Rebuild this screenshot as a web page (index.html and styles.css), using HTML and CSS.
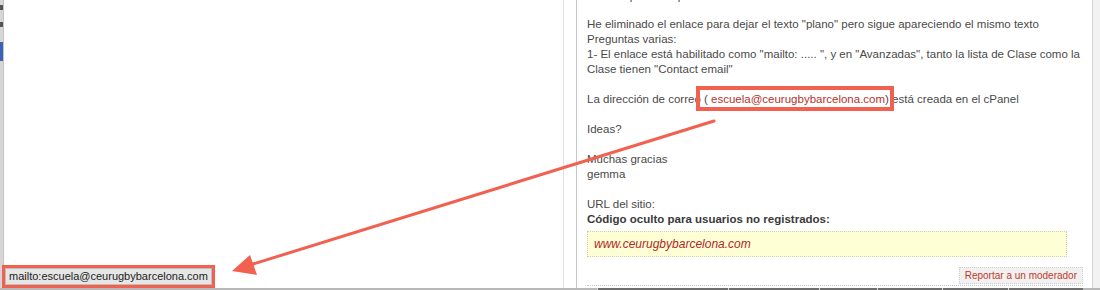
FILE: index.html
```html
<!DOCTYPE html>
<html lang="es">
<head>
  <meta charset="UTF-8">
  <title>Foro - mailto</title>
  <link rel="stylesheet" href="styles.css">
</head>
<body>
  <!-- cut-off sidebar at the very left -->
  <div class="side-edge">
    <span class="side-mark mark-a"></span>
    <span class="side-mark mark-b"></span>
    <span class="side-tab"></span>
  </div>

  <!-- empty left pane -->
  <div class="left-pane"></div>

  <div class="gutter"></div>

  <!-- forum post -->
  <div class="post">
    <div class="cut-line">Gracias por la respuesta.</div>
    <div class="post-body">
      He eliminado el enlace para dejar el texto "plano" pero sigue apareciendo el mismo texto<br>
      Preguntas varias:<br>
      1- El enlace está habilitado como "mailto: ..... ", y en "Avanzadas", tanto la lista de Clase como la<br>
      Clase tienen "Contact email"<br>
      <br>
      La dirección de correo <span class="mail-ref">( <span class="mail">escuela@ceurugbybarcelona.com</span>)</span> está creada en el cPanel<br>
      <br>
      Ideas?<br>
      <br>
      Muchas gracias<br>
      gemma<br>
      <br>
      URL del sitio:<br>
      <strong>Código oculto para usuarios no registrados:</strong>
    </div>
    <div class="hidden-code">www.ceurugbybarcelona.com</div>
    <div class="post-foot">
      <a class="report" href="#">Reportar a un moderador</a>
    </div>
  </div>

  <div class="scroll-edge"></div>

  <!-- bottom bar of the next post -->
  <div class="next-bar">
    <span class="seg seg-light"></span>
    <span class="seg" style="width:130px"></span>
    <span class="seg" style="width:90px"></span>
    <span class="seg" style="width:57px"></span>
    <span class="seg" style="width:64px"></span>
    <span class="seg" style="width:65px"></span>
    <span class="seg" style="width:74px"></span>
  </div>

  <!-- browser status bar, marked -->
  <div class="status-mark">
    <div class="status-bar">mailto:escuela@ceurugbybarcelona.com</div>
  </div>

  <!-- annotation arrow -->
  <svg class="arrow" width="1100" height="290" viewBox="0 0 1100 290">
    <line x1="714" y1="121" x2="250" y2="265" stroke="#f2614f" stroke-width="3" stroke-linecap="round"/>
    <polygon points="232,271 250,255 257,275" fill="#f2614f"/>
  </svg>
</body>
</html>
```

FILE: styles.css
```css
body {
  margin: 0;
  width: 1100px;
  height: 290px;
  overflow: hidden;
  display: flex;
  position: relative;
  background-color: #fff;
  font-family: "Liberation Sans", Arial, Helvetica, sans-serif;
}

/* left edge */
.side-edge {
  width: 3px;
  flex: none;
  background-color: #d6d6d6;
  border-right: 1px solid #c4c4c4;
  position: relative;
}

.side-mark {
  position: absolute;
  left: 0;
  width: 3px;
  height: 5px;
  background-color: #555;
}

.mark-a { top: 5px; }
.mark-b { top: 22px; }

.side-tab {
  position: absolute;
  left: 0;
  top: 42px;
  width: 3px;
  height: 19px;
  background-color: #3a63b8;
}

.left-pane {
  width: 559px;
  flex: none;
  border-right: 1px solid #e2e2e2;
}

.gutter {
  width: 12px;
  flex: none;
}

/* post */
.post {
  width: 496px;
  flex: none;
  padding: 0 9px 0 10px;
  border-left: 1px solid #c8c8c8;
  border-right: 1px solid #d4d4d4;
  color: #4a4a4a;
}

/* first line, scrolled mostly out of view */
.cut-line {
  margin-top: -11px;
  margin-bottom: 13px;
  font-size: 11.5px;
  line-height: 15px;
}

.post-body {
  font-size: 11.5px;
  line-height: 15px;
  white-space: nowrap;
}

.post-body strong {
  color: #3a3a3a;
}

.mail-ref {
  position: relative;
}

.mail-ref::after {
  content: "";
  position: absolute;
  left: -8px;
  right: -5px;
  top: -7px;
  bottom: -6px;
  border: 4px solid #f2614f;
}

.mail {
  color: #b8302c;
}

.hidden-code {
  width: 466px;
  margin-top: 4px;
  padding: 5px 6px;
  line-height: 14px;
  font-size: 12px;
  font-style: italic;
  color: #b0282a;
  background-color: #ffffd6;
  border: 1px dotted #cfcfa8;
}

.post-foot {
  display: flex;
  justify-content: flex-end;
  margin-top: 10px;
  padding-bottom: 1px;
  border-bottom: 1px dotted #c8c8c8;
}

.report {
  font-size: 10px;
  line-height: 13px;
  padding: 1px 5px;
  color: #c0392b;
  text-decoration: none;
  background-color: #f1f1f1;
  border: 1px dotted #cfcfcf;
}

.scroll-edge {
  flex: 1;
  background-color: #f2f2f2;
}

/* bottom strip */
.next-bar {
  position: absolute;
  left: 0;
  bottom: 0;
  width: 1100px;
  height: 2px;
  display: flex;
  background-color: #b8b8b8;
}

.seg {
  height: 2px;
  background-color: #6e6e6e;
  border-left: 1px solid #ddd;
}

.seg-light {
  width: 597px;
  background-color: #b8b8b8;
  border-left: none;
}

/* status bar */
.status-mark {
  position: absolute;
  left: 2px;
  bottom: 2px;
  border: 3px solid #f2614f;
}

.status-bar {
  padding: 1px 3px 1px 3px;
  font-size: 11px;
  line-height: 13px;
  color: #222;
  background-color: #e6e6e6;
  border: 1px solid #bdbdbd;
}

.arrow {
  position: absolute;
  left: 0;
  top: 0;
  pointer-events: none;
}
```
